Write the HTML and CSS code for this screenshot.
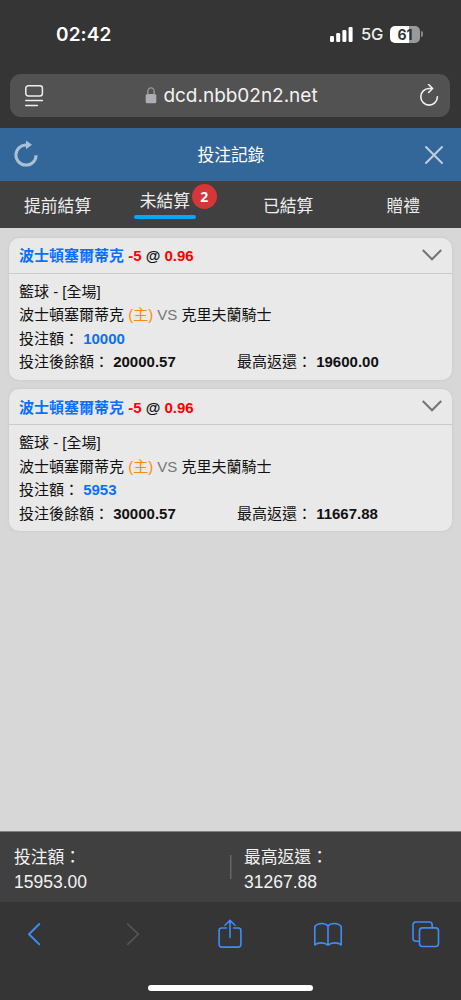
FILE: index.html
```html
<!DOCTYPE html>
<html lang="zh-Hant">
<head>
<meta charset="utf-8">
<meta name="viewport" content="width=device-width, initial-scale=1">
<title>投注記錄</title>
<link rel="stylesheet" href="styles.css">
</head>
<body>
<div class="phone">
  <div class="status">
    <span class="clock">02:42</span>
    <div class="indicators">
      <svg class="signal" width="23" height="15" viewBox="0 0 23 15" fill="#fff"><rect x="0" y="9" width="4" height="6" rx="1.2"/><rect x="6.2" y="6" width="4" height="9" rx="1.2"/><rect x="12.4" y="3" width="4" height="12" rx="1.2"/><rect x="18.6" y="0" width="4" height="15" rx="1.2"/></svg>
      <span class="network">5G</span>
      <div class="battery"><span>61</span></div>
      <i class="battery-tip"></i>
    </div>
  </div>
  <div class="address">
    <svg width="20" height="24" viewBox="0 0 20 24" fill="none" stroke="#eee" stroke-width="1.5" stroke-linecap="round"><rect x="1.8" y="1.8" width="16.6" height="10.2" rx="2.5"/><path d="M1.8 16.4H18.4M1.8 21.4H13.3"/></svg>
    <div class="domain">
      <svg width="12" height="17" viewBox="0 0 12 17"><rect x=".7" y="7" width="10.6" height="9.2" rx="1.5" fill="#aeadb3"/><path d="M2.8 8V4.5a3.2 3.6 0 0 1 6.4 0V8" fill="none" stroke="#999" stroke-width="1.4"/></svg>
      <span>dcd.nbb02n2.net</span>
    </div>
    <svg width="20" height="24" viewBox="0 1.5 20 24" fill="none" stroke="#f0f0f0" stroke-width="1.6" stroke-linecap="round" stroke-linejoin="round"><path d="M18.4 14.300A8.300 8.300 0 1 1 10.100 6h3.500M9.600 2l4 4-4 4"/></svg>
  </div>
  <header class="title-bar">
    <svg width="24" height="29" viewBox="0 0 24 29"><path d="M22.1 15.2A10.1 10.1 0 1 1 12.5 4.900" fill="none" stroke="#a9c0d8" stroke-width="3"/><path d="M12 .4l6 4.400-6 4.500z" fill="#a9c0d8"/></svg>
    <h1>投注記錄</h1>
    <svg width="20" height="20" viewBox="0 0 20 20" fill="none" stroke="#bccddd" stroke-width="2.1" stroke-linecap="round"><path d="M2 2l16 16M18 2L2 18"/></svg>
  </header>
  <nav class="tabs">
    <div class="tab">提前結算</div>
    <div class="tab active"><span class="tab-label">未結算<b class="badge">2</b></span></div>
    <div class="tab">已結算</div>
    <div class="tab">贈禮</div>
  </nav>
  <main class="bets">
    <article class="bet">
      <div class="bet-head">
        <div><span class="blue">波士頓塞爾蒂克</span> <span class="red">-5</span> @ <span class="red">0.96</span></div>
        <svg width="20" height="12" viewBox="0 0 20 12" fill="none" stroke="#747474" stroke-width="2"><path d="M.8 1L10 10.3 19.2 1"/></svg>
      </div>
      <div class="bet-body">
        <div>籃球 - [全場]</div>
        <div>波士頓塞爾蒂克 <span class="home">(主)</span> <span class="versus">VS</span> 克里夫蘭騎士</div>
        <div>投注額： <b class="blue">10000</b></div>
        <div class="pair"><div>投注後餘額： <b>20000.57</b></div><div>最高返還： <b>19600.00</b></div></div>
      </div>
    </article>
    <article class="bet">
      <div class="bet-head">
        <div><span class="blue">波士頓塞爾蒂克</span> <span class="red">-5</span> @ <span class="red">0.96</span></div>
        <svg width="20" height="12" viewBox="0 0 20 12" fill="none" stroke="#747474" stroke-width="2"><path d="M.8 1L10 10.3 19.2 1"/></svg>
      </div>
      <div class="bet-body">
        <div>籃球 - [全場]</div>
        <div>波士頓塞爾蒂克 <span class="home">(主)</span> <span class="versus">VS</span> 克里夫蘭騎士</div>
        <div>投注額： <b class="blue">5953</b></div>
        <div class="pair"><div>投注後餘額： <b>30000.57</b></div><div>最高返還： <b>11667.88</b></div></div>
      </div>
    </article>
  </main>
  <section class="totals">
    <div class="total"><div>投注額：</div><div class="amount">15953.00</div></div>
    <div class="total split"><div>最高返還：</div><div class="amount">31267.88</div></div>
  </section>
  <footer class="toolbar">
    <div class="tools">
      <svg width="28" height="30" viewBox="0 0 28 30"><path d="M19.3 5L9 15.2l10.3 10.2" stroke-width="1.9"/></svg>
      <svg class="disabled" width="28" height="30" viewBox="-1 0 28 30"><path d="M8.7 5L19.3 15.2 8.7 25.4" stroke-width="1.7"/></svg>
      <svg width="28" height="30" viewBox="0 0 28 30"><path d="M10.4 9H5.600a2.500 2.500 0 0 0-2.500 2.500v14.100a2.500 2.500 0 0 0 2.500 2.500h16.800a2.500 2.500 0 0 0 2.500-2.500V11.500a2.500 2.500 0 0 0-2.500-2.500h-4.800M14 18.500V1.300M9 6.200l5-5 5 5"/></svg>
      <svg width="28" height="30" viewBox="0 0 28 30"><path d="M14 7v19.200C10.800 23.300 4 22.900.8 26V7.500C3.800 3.500 11 3.500 14 7c3-3.500 10.200-3.500 13.200.5V26c-3.200-3.100-10-2.700-13.200.2"/></svg>
      <svg width="28" height="30" viewBox="0 0 28 30"><path d="M7.200 22.300H4a3 3 0 0 1-3-3V6a3 3 0 0 1 3-3h13.200a3 3 0 0 1 3 3v2.800"/><rect x="7.500" y="8.900" width="19" height="18.600" rx="3"/></svg>
    </div>
    <div class="home-indicator"></div>
  </footer>
</div>
</body>
</html>
```
FILE: styles.css
```css
* { box-sizing: border-box; }
body { margin: 0; font-family: "Liberation Sans", "Noto Sans CJK TC", sans-serif; }
svg { display: block; flex: none; }
.phone { width: 461px; height: 1000px; display: flex; flex-direction: column; background: #353535; overflow: hidden; }

.status { height: 74px; padding: 6px 38px 12px 56px; display: flex; align-items: center; justify-content: space-between; color: #fff; font-family: Inter, sans-serif; }
.clock { font-size: 19px; font-weight: 600; letter-spacing: .1px; }
.indicators { display: flex; align-items: center; }
.network { font-size: 16.5px; font-weight: 500; margin-left: 8px; width: 22px; letter-spacing: -.2px; color: #eee; }
.battery { width: 30px; height: 17px; margin-left: 7px; border-radius: 5px; background: linear-gradient(90deg, #fff 62%, #999 62%); color: #333; font-size: 14px; line-height: 17px; font-weight: 700; text-align: center; }
.battery-tip { width: 2px; height: 6px; margin-left: 1px; border-radius: 0 2px 2px 0; background: #888; }

.address { height: 43px; margin: 0 11px 11px 10px; padding: 0 11px 0 14px; border-radius: 11px; background: #525252; display: flex; align-items: center; justify-content: space-between; color: #f2f2f2; }
.domain { display: flex; align-items: center; gap: 6px; padding-bottom: 0; font: 400 19px Inter, sans-serif; letter-spacing: -.02px; }

.title-bar { height: 53px; padding: 0 17px 0 14px; background: #336699; display: flex; align-items: center; justify-content: space-between; color: #fff; }
.title-bar h1 { margin: 0; padding-bottom: 2px; font-size: 16.8px; font-weight: 400; }

.tabs { height: 47px; background: #404040; color: #eee; display: grid; grid-template-columns: repeat(4, 1fr); font-size: 16.8px; }
.tab { display: flex; align-items: center; justify-content: center; }
.tab.active { align-items: flex-start; padding-right: 16px; }
.tab-label { position: relative; height: 34px; padding: 0 6px; line-height: 41px; }
.tab-label::after { content: ""; display: block; height: 4px; margin: -7px -6px 0; border-radius: 2px; background: #00a8ff; }
.badge { position: absolute; left: 58px; top: 3px; width: 25px; height: 25px; border-radius: 50%; background: #d63638; color: #fff; font: 700 14px/25px "Noto Sans", sans-serif; text-align: center; }

.bets { flex: 1; padding: 9.5px 9px; background: #d7d7d7; display: flex; flex-direction: column; gap: 9.5px; border-bottom: 1px solid #808080; }
.bet { height: 142px; border-radius: 10px; background: #e9e9e9; box-shadow: 0 0 3px #c4c4c4; color: #111; }
.bet-head { height: 36px; padding: 0 10px 1px; border-bottom: 1px solid #cacaca; display: flex; align-items: center; justify-content: space-between; font-weight: 700; font-size: 15px; }
.bet-body { padding: 6px 10px; line-height: 23.5px; font-size: 15px; white-space: nowrap; }
.pair { display: grid; grid-template-columns: 218px 1fr; }
.blue { color: #0a70ff; }
.red { color: #f00; }
.home { color: #ff8c00; }
.versus { color: #777; }

.totals { height: 70px; padding-top: 5px; background: #404040; color: #f2f2f2; display: grid; grid-template-columns: 230px 1fr; align-items: center; font-size: 16.8px; line-height: 24px; }
.total { padding-left: 14px; }
.amount { font-size: 17.5px; }
.split { background: linear-gradient(#666, #666) left 9px / 1.5px 24px no-repeat; }

.toolbar { height: 98px; display: flex; flex-direction: column; align-items: center; }
.tools { width: 100%; padding: 17px 21px 0 20px; display: flex; justify-content: space-between; fill: none; stroke: #408cf7; stroke-width: 1.6; stroke-linecap: round; stroke-linejoin: round; }
.disabled { stroke: #555; }
.home-indicator { width: 165px; height: 6px; margin-top: 36px; border-radius: 3px; background: #fff; }
```
